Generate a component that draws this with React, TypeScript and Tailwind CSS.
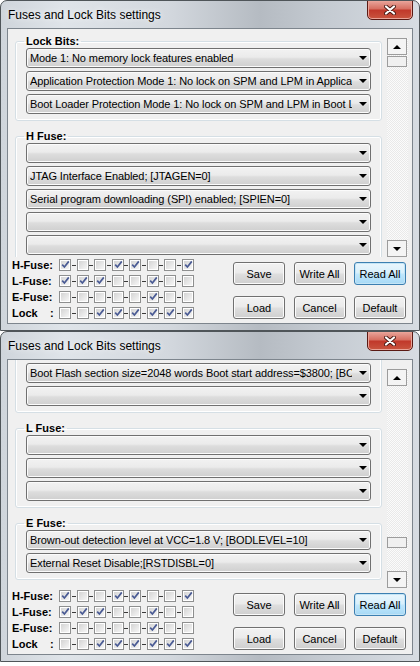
import React, { useLayoutEffect, useRef } from 'react';

const font = "font-['Liberation_Sans',Arial,sans-serif]";

const Arrow = ({ up = false }: { up?: boolean }) => (
  <svg width="8" height="4" viewBox="0 0 8 4" className="shrink-0">
    <polygon points={up ? '0,4 8,4 4,0' : '0,0 8,0 4,4'} fill="#000" />
  </svg>
);

const Combo = ({ text = '' }: { text?: string }) => (
  <div className="flex h-[20px] min-w-0 items-center rounded-[3px] border border-[#707070] bg-[linear-gradient(#f2f2f2,#ebebeb_45%,#dddddd_55%,#cfcfcf)] pl-[3px] pr-[3px] shadow-[inset_0_0_0_1px_#fbfbfb]">
    <span className="mr-[7px] min-w-0 flex-1 overflow-hidden whitespace-nowrap text-[11px] leading-[14px] tracking-[-0.1px] text-black">
      {text}
    </span>
    <Arrow />
  </div>
);

const Group = ({ title, items }: { title: string; items: string[] }) => (
  <fieldset className="min-w-0 rounded-[3px] border border-[#d5dfe5] px-[10px] pb-[6px] shadow-[inset_0_0_0_1px_#ffffff]">
    <legend className="-ml-[2px] px-[2px] text-[11px] font-bold leading-[14px] text-black">{title}</legend>
    <div className="flex min-w-0 flex-col gap-[3px]">
      {items.map((t, i) => (
        <Combo key={i} text={t} />
      ))}
    </div>
  </fieldset>
);

const Check = ({ on }: { on: boolean }) => (
  <span className="flex h-[12px] w-[12px] shrink-0 border border-[#8e8f8f] bg-white p-px">
    <span className="flex flex-1 items-center justify-center bg-[linear-gradient(135deg,#d4d4d4,#f6f6f6)]">
      {on && (
        <svg width="9" height="9" viewBox="0 0 9 9" className="-mr-px -mt-px">
          <path d="M1.2 4.6 L3.4 7 L7.8 1.4" fill="none" stroke="#4a5b94" strokeWidth="1.7" />
        </svg>
      )}
    </span>
  </span>
);

const fuseRows: [string, number[]][] = [
  ['H-Fuse:', [1, 0, 0, 1, 1, 0, 0, 1]],
  ['L-Fuse:', [1, 1, 1, 0, 0, 1, 0, 0]],
  ['E-Fuse:', [0, 0, 0, 0, 0, 1, 0, 0]],
  ['Lock    :', [0, 0, 1, 1, 1, 1, 1, 1]],
];

const Button = ({ label, focused = false }: { label: string; focused?: boolean }) => (
  <div
    className={
      focused
        ? 'flex h-[23px] w-[52px] items-center justify-center rounded-[3px] border border-[#3c7fb1] bg-[linear-gradient(#eaf6fd,#d9f0fc_45%,#bee6fd_55%,#a7d9f5)] text-[11px] leading-[14px] text-black shadow-[inset_0_0_0_1px_#c4e5f6]'
        : 'flex h-[23px] w-[52px] items-center justify-center rounded-[3px] border border-[#707070] bg-[linear-gradient(#f2f2f2,#ebebeb_45%,#dddddd_55%,#cfcfcf)] text-[11px] leading-[14px] text-black shadow-[inset_0_0_0_1px_#fbfbfb]'
    }
  >
    {label}
  </div>
);

const ScrollBox = ({ children }: { children: React.ReactNode }) => (
  <div className="flex h-[17px] w-[20px] items-center justify-center border border-[#9c9c9c] bg-[#f4f4f4]">{children}</div>
);

const Scrollbar = ({ thumbTop }: { thumbTop: number }) => (
  <div className="mt-[9px] flex h-[219px] w-[21px] flex-col bg-[repeating-conic-gradient(#e9e9e9_0%_25%,#fbfbfb_0%_50%)] bg-[length:2px_2px]">
    <ScrollBox>
      <Arrow up />
    </ScrollBox>
    <div className="flex-1">
      <div className="h-[11px] w-[20px] border border-[#9c9c9c] bg-[#f0f0f0]" style={{ marginTop: thumbTop }} />
    </div>
    <ScrollBox>
      <Arrow />
    </ScrollBox>
  </div>
);

const Window = ({ scroll, thumbTop }: { scroll: number; thumbTop: number }) => {
  const ref = useRef<HTMLDivElement>(null);
  useLayoutEffect(() => {
    if (ref.current) ref.current.scrollTop = scroll;
  }, [scroll]);

  return (
    <div className="flex h-[331px] w-[420px] flex-col overflow-hidden rounded-t-[7px] border border-[#4f5559] bg-[linear-gradient(90deg,#cfd5db_0%,#dfe4e9_15%,#d3d8de_40%,#b5bbc2_62%,#c5cbd2_78%,#d7dce2_100%)]">
      <div className="flex h-[27px] shrink-0 items-start justify-between">
        <span className="pl-[7px] pt-[7px] text-[12px] leading-[14px] text-black [text-shadow:0_0_6px_#ffffff]">
          Fuses and Lock Bits settings
        </span>
        <div className="-mt-px mr-[6px] flex h-[20px] w-[46px] items-center justify-center rounded-b-[5px] border border-[#5a1a14] bg-[linear-gradient(#e9a49a,#d77163_42%,#c1392b_52%,#c9553f)] shadow-[inset_0_0_0_1px_#eaa397]">
          <svg width="12" height="10" viewBox="0 0 12 10">
            <path d="M2 1.5 L10 8.5 M10 1.5 L2 8.5" stroke="#4a1a14" strokeWidth="4" strokeLinecap="round" />
            <path d="M2 1.5 L10 8.5 M10 1.5 L2 8.5" stroke="#ffffff" strokeWidth="2.2" strokeLinecap="round" />
          </svg>
        </div>
      </div>
      <div className="mx-[6px] flex h-[296px] shrink-0 flex-col border border-[#7d858d] bg-[#f0f0f0]">
        <div className="flex h-[228px] shrink-0 pl-[7px] pr-[4px]">
          <div ref={ref} className="h-[228px] w-[367px] shrink-0 overflow-hidden">
            <div className="flex flex-col gap-[8px] pb-[8px] pt-[5px]">
              <Group
                title="Lock Bits:"
                items={[
                  'Mode 1: No memory lock features enabled',
                  'Application Protection Mode 1: No lock on SPM and LPM in Application Section',
                  'Boot Loader Protection Mode 1: No lock on SPM and LPM in Boot Loader Section',
                ]}
              />
              <Group
                title="H Fuse:"
                items={[
                  '',
                  'JTAG Interface Enabled; [JTAGEN=0]',
                  'Serial program downloading (SPI) enabled; [SPIEN=0]',
                  '',
                  '',
                  'Boot Flash section size=2048 words Boot start address=$3800; [BOOTSZ=00]',
                  '',
                ]}
              />
              <Group title="L Fuse:" items={['', '', '']} />
              <Group
                title="E Fuse:"
                items={['Brown-out detection level at VCC=1.8 V; [BODLEVEL=10]', 'External Reset Disable;[RSTDISBL=0]']}
              />
            </div>
          </div>
          <div className="ml-[5px]">
            <Scrollbar thumbTop={thumbTop} />
          </div>
        </div>
        <div className="flex flex-1 justify-between pl-[4px] pr-[6px]">
          <div className="flex flex-col">
            {fuseRows.map(([label, bits]) => (
              <div key={label} className="flex h-[16px] items-center">
                <span className="w-[47px] whitespace-pre text-[11px] font-bold leading-[14px] text-black">{label}</span>
                {bits.map((b, i) => (
                  <React.Fragment key={i}>
                    {i > 0 && (
                      <span className="flex w-[5.5px] justify-center">
                        <span className="h-px w-[4px] bg-[#3a3a3a]" />
                      </span>
                    )}
                    <Check on={b === 1} />
                  </React.Fragment>
                ))}
              </div>
            ))}
          </div>
          <div className="grid grid-cols-3 content-start gap-x-[8.5px] gap-y-[11px] pt-[5px]">
            <Button label="Save" />
            <Button label="Write All" />
            <Button label="Read All" focused />
            <Button label="Load" />
            <Button label="Cancel" />
            <Button label="Default" />
          </div>
        </div>
      </div>
    </div>
  );
};

export default function App() {
  return (
    <div className={`${font} flex h-[666px] w-[420px] flex-col bg-white`}>
      <Window scroll={0} thumbTop={1} />
      <Window scroll={226} thumbTop={151} />
    </div>
  );
}
